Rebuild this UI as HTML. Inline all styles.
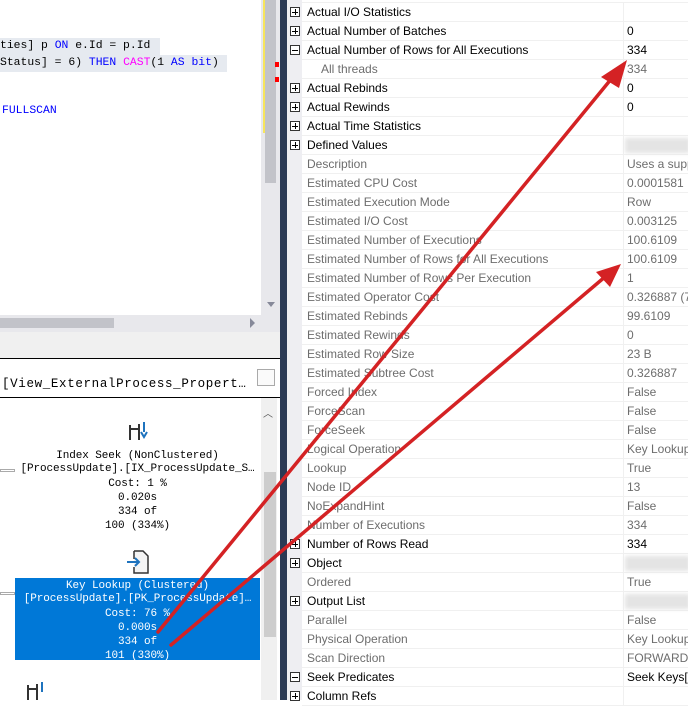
<!DOCTYPE html>
<html><head><meta charset="utf-8"><style>
*{margin:0;padding:0;box-sizing:border-box}
body{width:688px;height:700px;overflow:hidden;background:#fff;position:relative;font-family:"Liberation Sans",sans-serif}
.a{position:absolute}
.code{font-family:"Liberation Mono",monospace;font-size:11.4px;white-space:pre;color:#000}
.pl{font-family:"Liberation Mono",monospace;font-size:11px;text-align:center;position:absolute;left:0;width:275px;line-height:13px;white-space:pre;letter-spacing:-0.1px}
.row{position:absolute;left:302px;width:386px;height:19px;border-bottom:1px solid #f0f0f0;font-size:12px;line-height:18px}
.n{position:absolute;left:5px;color:#000}
.v{position:absolute;left:325px;color:#000;white-space:nowrap}
.g .n,.g .v{color:#6d6d6d}
.col{position:absolute;left:321px;top:0;width:1px;height:19px;background:#f0f0f0}
.ex{position:absolute;left:-12px;top:4px;width:10px;height:10px;border:1px solid #333;background:#fff}
.ex:before{content:"";position:absolute;left:1px;top:3.5px;width:6px;height:1px;background:#000}
.ex.p:after{content:"";position:absolute;left:3.5px;top:1px;width:1px;height:6px;background:#000}
.blur{position:absolute;left:323px;top:2px;width:65px;height:15px;background:#e4e4e4;filter:blur(2px)}
</style></head><body>
<div class="a" style="left:0;top:38px;width:160px;height:17px;background:#e6eaf0"></div>
<div class="a" style="left:0;top:55px;width:227px;height:17px;background:#e6eaf0"></div>
<div class="a code" style="left:0;top:40px">ties] p <span style="color:#00f">ON</span> e.Id = p.Id</div>
<div class="a code" style="left:0;top:57px">Status] = 6) <span style="color:#00f">THEN</span> <span style="color:#f0f">CAST</span>(1 <span style="color:#00f">AS</span> <span style="color:#00f">bit</span>)</div>
<div class="a code" style="left:2px;top:105px;color:#00f">FULLSCAN</div>
<div class="a" style="left:261px;top:0;width:19px;height:332px;background:#e8e8ec"></div>
<div class="a" style="left:263px;top:0;width:3px;height:133px;background:#f7e55c"></div>
<div class="a" style="left:265px;top:0;width:11px;height:183px;background:#c2c3c9"></div>
<div class="a" style="left:275px;top:62px;width:4px;height:5px;background:#f00"></div>
<div class="a" style="left:275px;top:77px;width:4px;height:5px;background:#f00"></div>
<div class="a" style="left:267px;top:302px;width:0;height:0;border-left:4px solid transparent;border-right:4px solid transparent;border-top:5px solid #868999"></div>
<div class="a" style="left:0;top:315px;width:261px;height:17px;background:#e8e8ec"></div>
<div class="a" style="left:0;top:318px;width:114px;height:10px;background:#c2c3c9"></div>
<div class="a" style="left:250px;top:318px;width:0;height:0;border-top:5px solid transparent;border-bottom:5px solid transparent;border-left:5px solid #868999"></div>
<div class="a" style="left:0;top:332px;width:280px;height:26px;background:#f0f0f0"></div>
<div class="a" style="left:0;top:358px;width:280px;height:40px;background:#fff;border-top:1px solid #000;border-bottom:1px solid #000"></div>
<div class="a code" style="left:2px;top:377px;font-size:12.5px;letter-spacing:0.65px">[View_ExternalProcess_Propert…</div>
<div class="a" style="left:257px;top:369px;width:18px;height:17px;border:1px solid #aaa;background:#fafafa"></div>
<div class="a" style="left:261px;top:398px;width:16px;height:302px;background:#f0f0f0"></div>
<div class="a" style="left:264px;top:472px;width:12px;height:165px;background:#cdcdcd"></div>
<div class="a" style="left:263px;top:405px;font-size:10px;color:#555">︿</div>
<svg class="a" style="left:127px;top:420px" width="22" height="24"><path d="M3 20V9h9v11M3 9V5M12 9V4" stroke="#333" stroke-width="2" fill="none"/><path d="M17 2v10M14 12l3 5 3-5" stroke="#1e73be" stroke-width="2" fill="none"/></svg>
<div class="pl" style="top:450px">Index Seek (NonClustered)
[ProcessUpdate].[IX_ProcessUpdate_S…</div>
<div class="pl" style="top:477px;line-height:14px">Cost: 1 %
0.020s
334 of
100 (334%)</div>
<div class="a" style="left:0;top:469px;width:15px;height:3px;border:1px solid #aaa"></div>
<svg class="a" style="left:125px;top:549px" width="26" height="26"><path d="M9 2h9l5 5v17H9v-6M9 10V2" stroke="#333" stroke-width="1.5" fill="#f4f4f4"/><path d="M2 13h12M10 9l4 4-4 4" stroke="#1e73be" stroke-width="2" fill="none"/></svg>
<div class="a" style="left:0;top:592px;width:15px;height:3px;border:1px solid #aaa"></div>
<div class="a" style="left:15px;top:578px;width:245px;height:82px;background:#0078d7"></div>
<div class="pl" style="top:580px;color:#fff;left:15px;width:245px">Key Lookup (Clustered)
[ProcessUpdate].[PK_ProcessUpdate]…</div>
<div class="pl" style="top:607px;color:#fff;left:15px;width:245px;line-height:14px">Cost: 76 %
0.000s
334 of
101 (330%)</div>
<svg class="a" style="left:25px;top:680px" width="22" height="20"><path d="M3 20V9h9v11M3 9V5M12 9V4" stroke="#333" stroke-width="2" fill="none"/><path d="M17 2v10" stroke="#1e73be" stroke-width="2" fill="none"/></svg>
<div class="a" style="left:280px;top:0;width:7px;height:700px;background:#2b3a55"></div>
<div class="a" style="left:287px;top:0;width:15px;height:700px;background:#eeeef2"></div>
<div id="g"></div>
<div class="a" style="left:302px;top:0;width:386px;height:3px;border-bottom:1px solid #f0f0f0"></div>
<script>
var R=[["p","Actual I/O Statistics",""],["p","Actual Number of Batches","0"],["m","Actual Number of Rows for All Executions","334"],["gi","All threads","334"],["p","Actual Rebinds","0"],["p","Actual Rewinds","0"],["p","Actual Time Statistics",""],["p","Defined Values","#"],["g","Description","Uses a supp"],["g","Estimated CPU Cost","0.0001581"],["g","Estimated Execution Mode","Row"],["g","Estimated I/O Cost","0.003125"],["g","Estimated Number of Executions","100.6109"],["g","Estimated Number of Rows for All Executions","100.6109"],["g","Estimated Number of Rows Per Execution","1"],["g","Estimated Operator Cost","0.326887 (76"],["g","Estimated Rebinds","99.6109"],["g","Estimated Rewinds","0"],["g","Estimated Row Size","23 B"],["g","Estimated Subtree Cost","0.326887"],["g","Forced Index","False"],["g","ForceScan","False"],["g","ForceSeek","False"],["g","Logical Operation","Key Lookup"],["g","Lookup","True"],["g","Node ID","13"],["g","NoExpandHint","False"],["g","Number of Executions","334"],["p","Number of Rows Read","334"],["p","Object","#"],["g","Ordered","True"],["p","Output List","#"],["g","Parallel","False"],["g","Physical Operation","Key Lookup"],["g","Scan Direction","FORWARD"],["m","Seek Predicates","Seek Keys[1"],["p","Column Refs",""]];
var h="";R.forEach(function(r,i){var t=r[0],cls="row"+(t[0]=="g"?" g":"");
h+='<div class="'+cls+'" style="top:'+(3+i*19)+'px">'+(t=="p"||t=="m"?'<div class="ex '+(t=="p"?"p":"")+'"></div>':'')+'<div class="col"></div><div class="n" style="'+(t=="gi"?"left:19px":"")+'">'+r[1]+'</div>'+(r[2]=="#"?'<div class="blur"></div>':'<div class="v">'+r[2]+'</div>')+'</div>';});
document.getElementById("g").innerHTML=h;
</script>
<svg class="a" style="left:0;top:0" width="688" height="700">
<g stroke="#d42224" stroke-width="3.5" fill="#d42224" stroke-linecap="round">
<line x1="158" y1="632" x2="612" y2="78"/>
<line x1="171" y1="645" x2="606" y2="276"/>
</g>
<polygon points="627,60 601,77 619,88" fill="#d42224"/>
<polygon points="621,264 596,272 610,287" fill="#d42224"/>
</svg>
</body></html>
